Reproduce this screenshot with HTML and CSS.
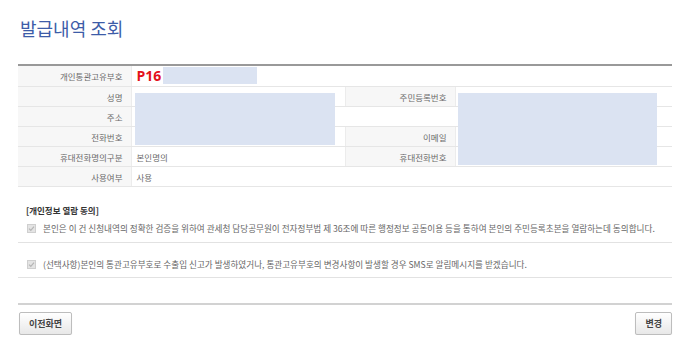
FILE: index.html
```html
<!DOCTYPE html>
<html>
<head>
    <title>발급내역 조회</title>
    <link rel="stylesheet" href="styles.css">
</head>
<body>
    <div class="page">
        <h1 class="title">발급내역 조회</h1>

        <div class="info">
            <table class="info-table">
                <colgroup>
                    <col class="col-label">
                    <col class="col-value">
                    <col class="col-label2">
                    <col>
                </colgroup>
                <tr class="first">
                    <th>개인통관고유부호</th>
                    <td colspan="3" class="code">P16</td>
                </tr>
                <tr>
                    <th>성명</th>
                    <td></td>
                    <th>주민등록번호</th>
                    <td></td>
                </tr>
                <tr>
                    <th>주소</th>
                    <td colspan="3"></td>
                </tr>
                <tr>
                    <th>전화번호</th>
                    <td></td>
                    <th>이메일</th>
                    <td></td>
                </tr>
                <tr>
                    <th>휴대전화명의구분</th>
                    <td>본인명의</td>
                    <th>휴대전화번호</th>
                    <td></td>
                </tr>
                <tr>
                    <th>사용여부</th>
                    <td colspan="3">사용</td>
                </tr>
            </table>
            <!-- 가림 처리 -->
            <span class="mask mask-code"></span>
            <span class="mask mask-left"></span>
            <span class="mask mask-right"></span>
        </div>

        <div class="agree">
            <p class="agree-title">[개인정보 열람 동의]</p>
            <div class="agree-item first">
                <span class="check"><svg width="9" height="9" viewBox="0 0 9 9"><rect x="0.5" y="0.5" width="8" height="8" fill="#e4e4e4" stroke="#cfcfcf"/><path d="M2 4.6 L3.8 6.3 L7 2.6" fill="none" stroke="#b5b5b5" stroke-width="1.2"/></svg></span>
                본인은 이 건 신청내역의 정확한 검증을 위하여 관세청 담당공무원이 전자정부법 제 36조에 따른 행정정보 공동이용 등을 통하여 본인의 주민등록초본을 열람하는데 동의합니다.
            </div>
            <div class="agree-item">
                <span class="check"><svg width="9" height="9" viewBox="0 0 9 9"><rect x="0.5" y="0.5" width="8" height="8" fill="#e4e4e4" stroke="#cfcfcf"/><path d="M2 4.6 L3.8 6.3 L7 2.6" fill="none" stroke="#b5b5b5" stroke-width="1.2"/></svg></span>
                (선택사항)본인의 통관고유부호로 수출입 신고가 발생하였거나, 통관고유부호의 변경사항이 발생할 경우 SMS로 알림메시지를 받겠습니다.
            </div>
        </div>

        <div class="buttons">
            <button type="button" class="btn">이전화면</button>
            <button type="button" class="btn">변경</button>
        </div>
    </div>
</body>
</html>
```

FILE: styles.css
```css
body {
    font-family: "Noto Sans CJK KR", "Noto Sans", sans-serif;
    background-color: #fff;
    color: #555;
    margin: 0;
    padding: 0;
}

.page {
    padding: 0 21px 0 18px;
}

.title {
    margin: 0;
    padding: 15px 0 0 2px;
    height: 64px;
    box-sizing: border-box;
    font-size: 18px;
    font-weight: normal;
    line-height: 26px;
    color: #3d5ca8;
}

.info {
    position: relative;
}

.info-table {
    width: 100%;
    border-collapse: collapse;
    border-top: 2px solid #999;
    table-layout: fixed;
}

.col-label {
    width: 113px;
}

.col-value {
    width: 214px;
}

.col-label2 {
    width: 110px;
}

.info-table th,
.info-table td {
    height: 19px;
    padding: 0 8px 0 5px;
    border-bottom: 1px solid #e6e6e6;
    font-size: 8.5px;
    line-height: 12px;
    white-space: nowrap;
}

.info-table th {
    background-color: #f7f7f7;
    color: #6a6a6a;
    font-weight: normal;
    text-align: right;
    border-right: 1px solid #ececec;
    border-left: 1px solid #ececec;
}

.info-table tr th:first-child {
    border-left: none;
}

.info-table td {
    color: #6a6a6a;
}

.info-table tr.first th,
.info-table tr.first td {
    height: 20px;
}

.info-table td.code {
    color: #e3121b;
    font-family: "Open Sans", "Liberation Sans", sans-serif;
    font-weight: bold;
    font-size: 14px;
}

.mask {
    position: absolute;
    background-color: #dbe3f2;
}

.mask-code {
    left: 145px;
    top: 3px;
    width: 94px;
    height: 17px;
}

.mask-left {
    left: 117px;
    top: 29px;
    width: 200px;
    height: 52px;
}

.mask-right {
    left: 440px;
    top: 29px;
    width: 199px;
    height: 72px;
}

.agree {
    margin-top: 16px;
}

.agree-title {
    margin: 0;
    padding-left: 8px;
    font-size: 8.5px;
    font-weight: bold;
    line-height: 14px;
    color: #333;
}

.agree-item {
    display: flex;
    align-items: center;
    padding: 15px 0 7px 0;
    border-bottom: 1px solid #e2e2e2;
    font-size: 8.6px;
    line-height: 12px;
    color: #666;
    white-space: nowrap;
}

.agree-item.first {
    padding: 5px 0 8px 0;
}

.check {
    display: flex;
    margin: 0 7px 0 9px;
}

.buttons {
    margin-top: 25px;
    border-top: 2px solid #d2d2d2;
    padding-top: 7px;
    display: flex;
    justify-content: space-between;
}

.btn {
    height: 23px;
    padding: 0 9px;
    border: 1px solid #bdbdbd;
    border-radius: 2px;
    background: linear-gradient(#fff, #e8e8e8);
    box-shadow: 0 1px 1px rgba(0, 0, 0, 0.08);
    font-family: "Noto Sans CJK KR", sans-serif;
    font-size: 9px;
    font-weight: bold;
    color: #444;
    cursor: pointer;
}

.btn:first-child {
    margin-left: 1px;
}
```
